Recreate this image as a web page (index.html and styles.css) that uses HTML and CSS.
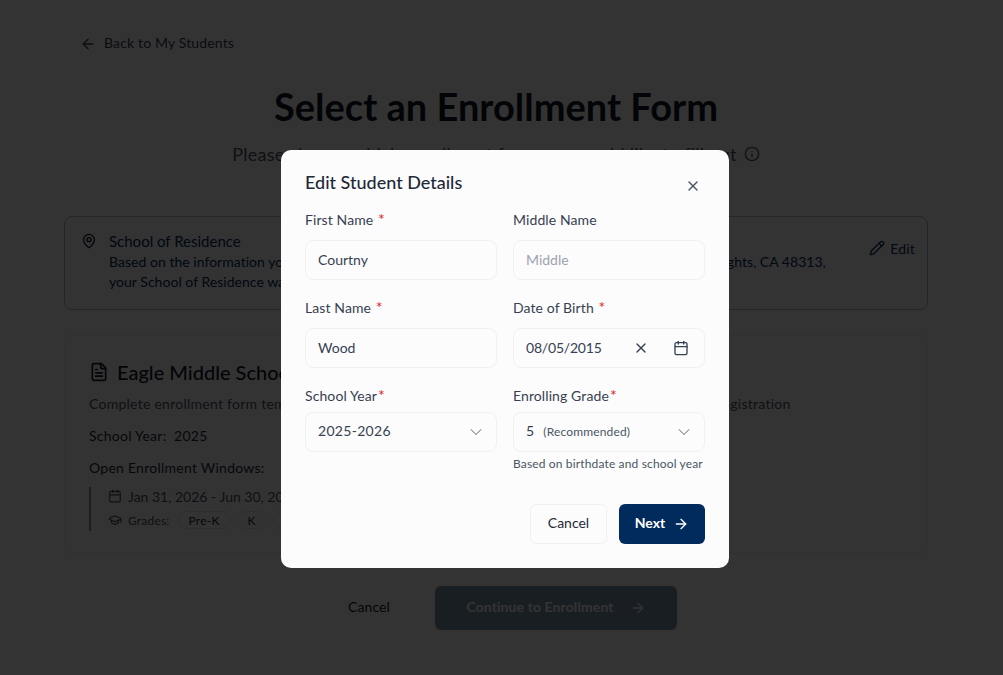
FILE: index.html
```html
<!DOCTYPE html>
<html lang="en">
<head>
    <meta charset="UTF-8">
    <meta name="viewport" content="width=device-width, initial-scale=1.0">
    <title>Select an Enrollment Form</title>
    <link rel="stylesheet" href="styles.css">
</head>
<body>
    <div class="page">
        <a class="back-link" href="#">
            <svg class="icon" width="16" height="16" viewBox="0 0 24 24"><path d="m12 19-7-7 7-7"/><path d="M19 12H5"/></svg>
            Back to My Students
        </a>

        <header class="page-header">
            <h1>Select an Enrollment Form</h1>
            <p class="subtitle">
                Please choose which enrollment form you would like to fill out
                <svg class="icon" width="16" height="16" viewBox="0 0 24 24"><circle cx="12" cy="12" r="10"/><path d="M12 16v-4"/><path d="M12 8h.01"/></svg>
            </p>
        </header>

        <section class="residence">
            <svg class="icon residence-pin" width="16" height="16" viewBox="0 0 24 24"><path d="M20 10c0 5-5.500 10.200-7.400 11.800a1 1 0 0 1-1.200 0C9.500 20.200 4 15 4 10a8 8 0 0 1 16 0"/><circle cx="12" cy="10" r="3"/></svg>
            <div class="residence-body">
                <h3>School of Residence</h3>
                <p>Based on the information you provided for the home address at 1234 North Main Street in Eagle Heights, CA 48313,<br>your School of Residence was found.</p>
            </div>
            <a class="edit-link" href="#">
                <svg class="icon" width="16" height="16" viewBox="0 0 24 24"><path d="M21.200 6.800a2.800 2.800 0 0 0-4-4L3.800 16.200a2 2 0 0 0-.5.8l-1.300 4.400a.5.500 0 0 0 .6.600l4.400-1.300a2 2 0 0 0 .8-.5z"/><path d="m15 5 4 4"/></svg>
                Edit
            </a>
        </section>

        <section class="form-card">
            <h2>
                <svg class="icon" width="20" height="20" viewBox="0 0 24 24"><path d="M15 2H6a2 2 0 0 0-2 2v16a2 2 0 0 0 2 2h12a2 2 0 0 0 2-2V7z"/><path d="M14 2v4a2 2 0 0 0 2 2h4"/><path d="M16 13H8"/><path d="M16 17H8"/><path d="M10 9H8"/></svg>
                Eagle Middle School Enrollment Form
            </h2>
            <p class="form-desc">Complete enrollment form template for students who are new to the school and need to complete registration</p>
            <p class="form-year">School Year:&nbsp; 2025</p>
            <p class="form-windows">Open Enrollment Windows:</p>
            <div class="window">
                <div class="window-date">
                    <svg class="icon" width="14" height="14" viewBox="0 0 24 24"><path d="M8 2v4"/><path d="M16 2v4"/><rect x="3" y="4" width="18" height="18" rx="2"/><path d="M3 10h18"/></svg>
                    Jan 31, 2026 - Jun 30, 2026
                </div>
                <div class="window-grades">
                    <svg class="icon" width="14" height="14" viewBox="0 0 24 24"><path d="M21.420 10.920a1 1 0 0 0-.02-1.840L12.830 5.180a2 2 0 0 0-1.660 0L2.600 9.080a1 1 0 0 0 0 1.830l8.570 3.910a2 2 0 0 0 1.660 0z"/><path d="M22 10v6"/><path d="M6 12.500V16a6 3 0 0 0 12 0v-3.500"/></svg>
                    <span class="grades-label">Grades:</span>
                    <span class="grade-chip chip-prek">Pre-K</span>
                    <span class="grade-chip chip-k">K</span>
                    <span class="grade-chip">1</span>
                </div>
            </div>
        </section>

        <div class="page-actions">
            <button class="page-cancel"><span>Cancel</span></button>
            <button class="continue" disabled>
                <span>Continue to Enrollment</span>
                <svg class="icon" width="16" height="16" viewBox="0 0 24 24"><path d="M5 12h14"/><path d="m12 5 7 7-7 7"/></svg>
            </button>
        </div>
    </div>

    <div class="overlay">
        <div class="modal">
            <div class="modal-header">
                <h2>Edit Student Details</h2>
                <button class="close" aria-label="Close">
                    <svg class="icon" width="16" height="16" viewBox="0 0 24 24"><path d="M18 6 6 18"/><path d="m6 6 12 12"/></svg>
                </button>
            </div>

            <div class="fields">
                <div class="field">
                    <label>First Name <span class="req">*</span></label>
                    <div class="input"><span>Courtny</span></div>
                </div>
                <div class="field">
                    <label>Middle Name</label>
                    <div class="input placeholder"><span>Middle</span></div>
                </div>
                <div class="field">
                    <label>Last Name <span class="req">*</span></label>
                    <div class="input"><span>Wood</span></div>
                </div>
                <div class="field">
                    <label>Date of Birth <span class="req">*</span></label>
                    <div class="input date-input">
                        <span class="date-value">08/05/2015</span>
                        <svg class="icon clear" width="16" height="16" viewBox="0 0 24 24"><path d="M18 6 6 18"/><path d="m6 6 12 12"/></svg>
                        <svg class="icon" width="16" height="16" viewBox="0 0 24 24"><path d="M8 2v4"/><path d="M16 2v4"/><rect x="3" y="4" width="18" height="18" rx="2"/><path d="M3 10h18"/></svg>
                    </div>
                </div>
                <div class="field field-select">
                    <label>School Year<span class="req">*</span></label>
                    <div class="input select">
                        <span>2025-2026</span>
                        <svg class="icon chevron" width="20" height="20" viewBox="0 0 24 24"><path d="m6 9 6 6 6-6"/></svg>
                    </div>
                </div>
                <div class="field field-select">
                    <label>Enrolling Grade<span class="req">*</span></label>
                    <div class="input select">
                        <span>5 <small>(Recommended)</small></span>
                        <svg class="icon chevron" width="20" height="20" viewBox="0 0 24 24"><path d="m6 9 6 6 6-6"/></svg>
                    </div>
                    <p class="hint">Based on birthdate and school year</p>
                </div>
            </div>

            <div class="modal-actions">
                <button class="btn btn-cancel"><span>Cancel</span></button>
                <button class="btn btn-next">
                    <span>Next</span>
                    <svg class="icon" width="16" height="16" viewBox="0 0 24 24"><path d="M5 12h14"/><path d="m12 5 7 7-7 7"/></svg>
                </button>
            </div>
        </div>
    </div>
</body>
</html>
```

FILE: styles.css
```css
* {
    box-sizing: border-box;
}

body {
    margin: 0;
    height: 675px;
    overflow: hidden;
    background-color: #fff;
    color: #1f2937;
    font-family: "Lato", "Noto Sans", sans-serif;
    font-size: 14px;
}

h1, h2, h3, p {
    margin: 0;
}

.icon {
    flex: none;
    fill: none;
    stroke: currentColor;
    stroke-width: 2;
    stroke-linecap: round;
    stroke-linejoin: round;
}

.page {
    width: 992px;
    padding: 33px 64px 0;
}

.back-link {
    display: flex;
    align-items: center;
    gap: 8px;
    height: 20px;
    padding: 0 0 2px 16px;
    color: #374151;
    letter-spacing: 0.15px;
    text-decoration: none;
}

.back-link .icon {
    margin-top: 4px;
}

.page-header {
    margin-top: 33px;
    text-align: center;
}

h1 {
    font-size: 38px;
    line-height: 40px;
    font-weight: 700;
    color: #111827;
}

.subtitle {
    display: flex;
    justify-content: center;
    align-items: center;
    gap: 7px;
    margin-top: 14px;
    font-size: 18px;
    line-height: 28px;
    letter-spacing: 0.25px;
    color: #4b5563;
}

.residence {
    display: flex;
    height: 94px;
    margin-top: 48px;
    padding: 14px 12px 0 16px;
    border: 1px solid #a9bdd4;
    border-radius: 8px;
    background-color: #fff;
}

.residence-pin {
    margin-top: 2px;
    color: #111827;
}

.residence-body {
    flex: 1;
    margin-left: 12px;
}

.residence-body h3 {
    font-size: 15px;
    line-height: 21px;
    font-weight: 400;
    color: #002b5c;
}

.residence-body p {
    line-height: 20px;
    letter-spacing: 0.03px;
    white-space: nowrap;
    color: #002b5c;
}

.edit-link {
    display: flex;
    align-items: center;
    gap: 5px;
    height: 20px;
    margin: 7px 0 0 auto;
    color: #002b5c;
    letter-spacing: 0.2px;
    text-decoration: none;
}

.form-card {
    height: 220px;
    margin-top: 24px;
    padding: 23px 24px;
    border: 1px solid #f0f1f3;
    border-radius: 8px;
}

.form-card h2 {
    display: flex;
    align-items: center;
    gap: 8px;
    font-size: 20px;
    line-height: 28px;
    font-weight: 500;
    color: #111827;
}

.form-desc {
    margin-top: 8px;
    line-height: 20px;
    letter-spacing: 0.26px;
    color: #4b5563;
}

.form-year {
    margin-top: 12px;
    line-height: 20px;
    letter-spacing: 0.25px;
    color: #1f2937;
}

.form-windows {
    margin-top: 12px;
    line-height: 20px;
    letter-spacing: 0.25px;
    color: #1f2937;
}

.window {
    margin-top: 9px;
    padding-left: 17px;
    border-left: 2px solid #8b93a7;
}

.window-date {
    display: flex;
    align-items: center;
    gap: 6px;
    height: 18px;
    color: #4b5563;
}

.window-grades {
    display: flex;
    align-items: center;
    gap: 6px;
    height: 22px;
    margin-top: 4px;
    font-size: 12px;
    letter-spacing: 0.2px;
    color: #4b5563;
}

.grades-label {
    margin-right: 2px;
}

.grade-chip {
    display: flex;
    justify-content: center;
    align-items: center;
    width: 30px;
    height: 18px;
    border: 1px solid #e5e7eb;
    border-radius: 999px;
    color: #1f2937;
}

.chip-prek {
    width: 53px;
}

.page-actions {
    display: flex;
    justify-content: center;
    align-items: center;
    gap: 12px;
    margin-top: 32px;
}

.page-cancel {
    width: 108px;
    height: 44px;
    padding: 0 0 4px;
    border: none;
    background: none;
    font: inherit;
    letter-spacing: 0.1px;
    color: #111827;
}

.continue {
    display: flex;
    justify-content: center;
    align-items: center;
    gap: 16px;
    width: 242px;
    height: 44px;
    border: none;
    border-radius: 6px;
    background-color: #7f95ad;
    color: #fff;
    font: inherit;
    font-weight: 700;
}

.continue span {
    margin-bottom: 4px;
    letter-spacing: 0.1px;
}

.overlay {
    position: fixed;
    inset: 0;
    padding: 150px 0 0 281px;
    background-color: rgba(0, 0, 0, 0.8);
}

.modal {
    width: 448px;
    height: 418px;
    padding: 24px;
    border-radius: 10px;
    background-color: #fcfcfd;
}

.modal-header {
    display: flex;
    justify-content: space-between;
    height: 36px;
}

.modal-header h2 {
    font-size: 18px;
    line-height: 16px;
    font-weight: 500;
    color: #1f2937;
}

.close {
    display: flex;
    justify-content: center;
    align-items: center;
    width: 24px;
    height: 24px;
    padding: 0;
    border: none;
    background: none;
    color: #4b5563;
}

.fields {
    display: grid;
    grid-template-columns: 192px 192px;
    column-gap: 16px;
    row-gap: 18px;
}

.field label {
    display: block;
    height: 30px;
    line-height: 20px;
    letter-spacing: 0.1px;
    color: #374151;
}

.field-select label {
    height: 26px;
}

.req {
    margin-left: 1px;
    font-size: 16px;
    line-height: 16px;
    color: #dc2626;
}

.input {
    display: flex;
    align-items: center;
    height: 40px;
    padding: 0 15px 0 12px;
    border: 1px solid #f0f1f3;
    border-radius: 8px;
    background-color: #fcfcfd;
    color: #374151;
}

.input span {
    margin-bottom: 2px;
}

.placeholder {
    color: #9ca3af;
}

.date-value {
    flex: 1;
    letter-spacing: -0.2px;
}

.clear {
    margin-right: 24px;
}

.select {
    justify-content: space-between;
    padding-right: 10px;
}

.select span {
    margin-bottom: 4px;
    letter-spacing: 0.3px;
}

.select small {
    margin-left: 5px;
    font-size: 12px;
    letter-spacing: 0.15px;
    color: #4b5563;
}

.chevron {
    stroke-width: 1.25;
    color: #7b8390;
}

.hint {
    margin-top: 4px;
    font-size: 12px;
    line-height: 16px;
    letter-spacing: 0.15px;
    white-space: nowrap;
    color: #4b5563;
}

.modal-actions {
    display: flex;
    justify-content: flex-end;
    gap: 12px;
    margin-top: 32px;
}

.btn {
    display: flex;
    justify-content: center;
    align-items: center;
    gap: 8px;
    height: 40px;
    border-radius: 6px;
    font: inherit;
}

.btn span {
    margin-bottom: 4px;
}

.btn-cancel {
    width: 77px;
    border: 1px solid #f0f1f3;
    background-color: #fcfcfd;
    color: #1f2937;
}

.btn-next {
    width: 86px;
    border: none;
    background-color: #002b5c;
    color: #fff;
    font-weight: 700;
}
```
